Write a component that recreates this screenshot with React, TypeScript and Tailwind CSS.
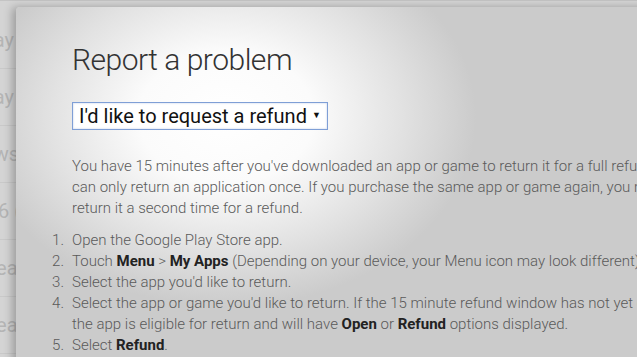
import React from "react";

const rows = [
  { text: "Google Play", box: "w-[14px]" },
  { text: "Google Play", box: "w-[14px]" },
  { text: "Play News", box: "w-[19px]" },
  { text: "2016 (Jan", box: "w-[54px]" },
  { text: "Read more", box: "w-[80px]" },
  { text: "Read more", box: "w-[80px]" },
];

const Strong = ({ children }: { children: React.ReactNode }) => (
  <b className="font-bold text-[#222]">{children}</b>
);

const steps: React.ReactNode[] = [
  <>Open the Google Play Store app.</>,
  <>
    Touch <Strong>Menu</Strong> &gt; <Strong>My Apps</Strong> (Depending on your device, your Menu icon may look
    different).
  </>,
  <>Select the app you'd like to return.</>,
  <>
    Select the app or game you'd like to return. If the 15 minute refund window has not yet expired,
    <br />
    the app is eligible for return and will have <Strong>Open</Strong> or <Strong>Refund</Strong> options displayed.
  </>,
  <>
    Select <Strong>Refund</Strong>.
  </>,
];

const App = () => {
  return (
    <div className="relative w-[637px] h-[357px] overflow-hidden bg-[#d4d4d4] font-['Roboto',_'Liberation_Sans',_sans-serif]">
      {/* page behind the dialog */}
      <div className="flex flex-col pt-[11px] border-t border-[#c4c4c4]">
        {rows.map((r, i) => (
          <div
            key={i}
            className="h-[57px] flex items-center border-b border-[#c9c9c9] text-[20px] text-[#b5b5b5] whitespace-nowrap"
          >
            <div className={`${r.box} flex justify-end`}>
              <span>{r.text}</span>
            </div>
          </div>
        ))}
      </div>

      {/* dialog */}
      <div className="absolute left-[16px] top-[7px] w-[700px] h-[400px] rounded-tl-[4px] shadow-[-4px_0_8px_rgba(0,0,0,0.25)] bg-[radial-gradient(ellipse_250px_190px_at_210px_110px,#ffffff_0%,#fbfbfb_35%,#e2e2e2_70%,#cbcbcb_100%)] text-[#5a5a5a]">
        <div className="pl-[56px] pt-[33px] whitespace-nowrap">
          <h1 className="text-[30px] font-light text-[#333] leading-[40px] tracking-[-0.5px]">Report a problem</h1>
          <div className="mt-[22px] w-[256px] h-[28px] border border-[#7f9fd6] bg-white flex items-center justify-between pl-[6px] pr-[6px] shadow-[inset_0_0_2px_rgba(120,150,210,0.5)]">
            <span className="text-[20px] text-[#111] leading-none">I'd like to request a refund</span>
            <span className="text-[9px] text-[#111]">▼</span>
          </div>
          <p className="mt-[26px] text-[15px] font-light leading-[21px]">
            You have 15 minutes after you've downloaded an app or game to return it for a full refund. You
            <br />
            can only return an application once. If you purchase the same app or game again, you may not
            <br />
            return it a second time for a refund.
          </p>
          <ol className="mt-[11px] -ml-[24px] text-[15px] font-light leading-[21px]">
            {steps.map((s, i) => (
              <li key={i} className="flex">
                <span className="w-[16px] shrink-0 text-right mr-[8px]">{i + 1}.</span>
                <span>{s}</span>
              </li>
            ))}
          </ol>
        </div>
      </div>
    </div>
  );
};

export default App;
